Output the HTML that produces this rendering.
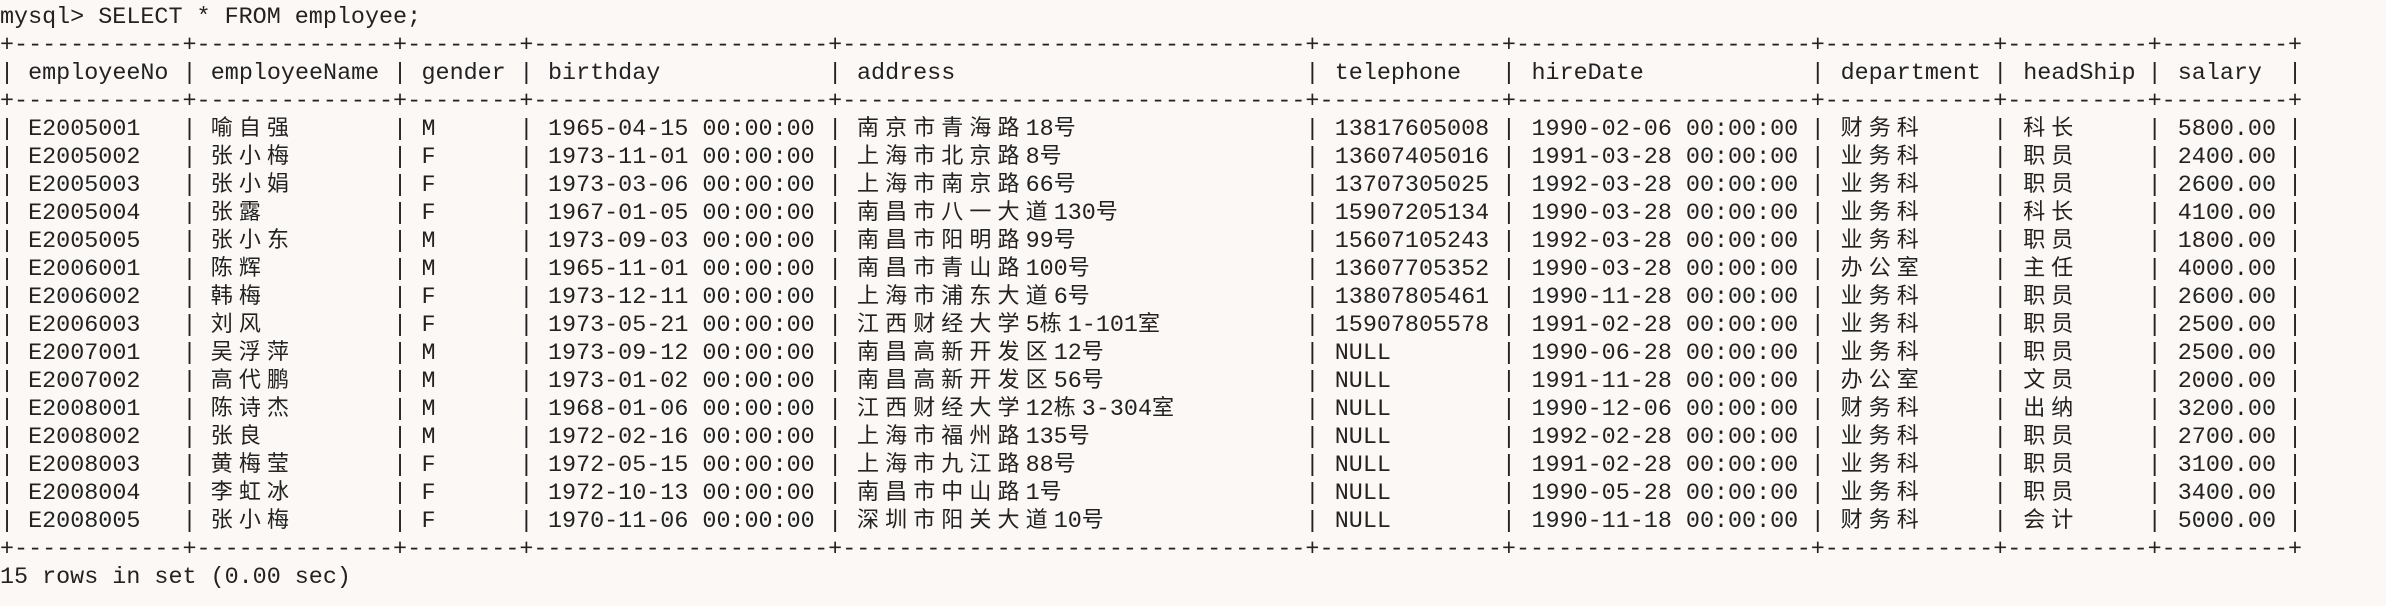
<!DOCTYPE html>
<html><head><meta charset="utf-8"><style>
html,body{margin:0;padding:0;background:#fcf8f5;}
body{width:2386px;height:606px;overflow:hidden;position:relative;color:#222;font-family:"Liberation Mono","Noto Sans CJK SC",monospace;font-size:23.4px;}
.l{position:absolute;left:0;height:28px;line-height:28px;white-space:pre;width:2386px;}
.r::before{content:"|            |              |        |                     |                                 |             |                     |            |          |         |";position:absolute;left:0;top:0;}
.l span{position:absolute;top:0;height:28px;}
b{font-weight:normal;font-family:"Noto Sans CJK SC",sans-serif;font-size:22px;letter-spacing:6.1px;display:inline-block;vertical-align:top;height:28px;line-height:28px;position:relative;top:-4px;}
.a{left:28.1px}.b{left:210.75px}.c{left:421.5px}.d{left:548px}.e{left:857px}.f{left:1334.75px}.g{left:1531.5px}.h{left:1840.6px}.i{left:2023.2px}.j{left:2177.75px}
#w{position:absolute;left:0;top:3px;width:2386px;height:600px;}
</style></head><body><div id="w">
<div class="l" style="top:1px">mysql&gt; SELECT * FROM employee;</div>
<div class="l" style="top:29px">+------------+--------------+--------+---------------------+---------------------------------+-------------+---------------------+------------+----------+---------+</div>
<div class="l r" style="top:57px"><span class="a">employeeNo</span><span class="b">employeeName</span><span class="c">gender</span><span class="d">birthday</span><span class="e">address</span><span class="f">telephone</span><span class="g">hireDate</span><span class="h">department</span><span class="i">headShip</span><span class="j">salary</span></div>
<div class="l" style="top:85px">+------------+--------------+--------+---------------------+---------------------------------+-------------+---------------------+------------+----------+---------+</div>
<div class="l r" style="top:113px"><span class="a">E2005001</span><span class="b"><b>喻自强</b></span><span class="c">M</span><span class="d">1965-04-15 00:00:00</span><span class="e"><b>南京市青海路</b>18<b>号</b></span><span class="f">13817605008</span><span class="g">1990-02-06 00:00:00</span><span class="h"><b>财务科</b></span><span class="i"><b>科长</b></span><span class="j">5800.00</span></div>
<div class="l r" style="top:141px"><span class="a">E2005002</span><span class="b"><b>张小梅</b></span><span class="c">F</span><span class="d">1973-11-01 00:00:00</span><span class="e"><b>上海市北京路</b>8<b>号</b></span><span class="f">13607405016</span><span class="g">1991-03-28 00:00:00</span><span class="h"><b>业务科</b></span><span class="i"><b>职员</b></span><span class="j">2400.00</span></div>
<div class="l r" style="top:169px"><span class="a">E2005003</span><span class="b"><b>张小娟</b></span><span class="c">F</span><span class="d">1973-03-06 00:00:00</span><span class="e"><b>上海市南京路</b>66<b>号</b></span><span class="f">13707305025</span><span class="g">1992-03-28 00:00:00</span><span class="h"><b>业务科</b></span><span class="i"><b>职员</b></span><span class="j">2600.00</span></div>
<div class="l r" style="top:197px"><span class="a">E2005004</span><span class="b"><b>张露</b></span><span class="c">F</span><span class="d">1967-01-05 00:00:00</span><span class="e"><b>南昌市八一大道</b>130<b>号</b></span><span class="f">15907205134</span><span class="g">1990-03-28 00:00:00</span><span class="h"><b>业务科</b></span><span class="i"><b>科长</b></span><span class="j">4100.00</span></div>
<div class="l r" style="top:225px"><span class="a">E2005005</span><span class="b"><b>张小东</b></span><span class="c">M</span><span class="d">1973-09-03 00:00:00</span><span class="e"><b>南昌市阳明路</b>99<b>号</b></span><span class="f">15607105243</span><span class="g">1992-03-28 00:00:00</span><span class="h"><b>业务科</b></span><span class="i"><b>职员</b></span><span class="j">1800.00</span></div>
<div class="l r" style="top:253px"><span class="a">E2006001</span><span class="b"><b>陈辉</b></span><span class="c">M</span><span class="d">1965-11-01 00:00:00</span><span class="e"><b>南昌市青山路</b>100<b>号</b></span><span class="f">13607705352</span><span class="g">1990-03-28 00:00:00</span><span class="h"><b>办公室</b></span><span class="i"><b>主任</b></span><span class="j">4000.00</span></div>
<div class="l r" style="top:281px"><span class="a">E2006002</span><span class="b"><b>韩梅</b></span><span class="c">F</span><span class="d">1973-12-11 00:00:00</span><span class="e"><b>上海市浦东大道</b>6<b>号</b></span><span class="f">13807805461</span><span class="g">1990-11-28 00:00:00</span><span class="h"><b>业务科</b></span><span class="i"><b>职员</b></span><span class="j">2600.00</span></div>
<div class="l r" style="top:309px"><span class="a">E2006003</span><span class="b"><b>刘风</b></span><span class="c">F</span><span class="d">1973-05-21 00:00:00</span><span class="e"><b>江西财经大学</b>5<b>栋</b>1-101<b>室</b></span><span class="f">15907805578</span><span class="g">1991-02-28 00:00:00</span><span class="h"><b>业务科</b></span><span class="i"><b>职员</b></span><span class="j">2500.00</span></div>
<div class="l r" style="top:337px"><span class="a">E2007001</span><span class="b"><b>吴浮萍</b></span><span class="c">M</span><span class="d">1973-09-12 00:00:00</span><span class="e"><b>南昌高新开发区</b>12<b>号</b></span><span class="f">NULL</span><span class="g">1990-06-28 00:00:00</span><span class="h"><b>业务科</b></span><span class="i"><b>职员</b></span><span class="j">2500.00</span></div>
<div class="l r" style="top:365px"><span class="a">E2007002</span><span class="b"><b>高代鹏</b></span><span class="c">M</span><span class="d">1973-01-02 00:00:00</span><span class="e"><b>南昌高新开发区</b>56<b>号</b></span><span class="f">NULL</span><span class="g">1991-11-28 00:00:00</span><span class="h"><b>办公室</b></span><span class="i"><b>文员</b></span><span class="j">2000.00</span></div>
<div class="l r" style="top:393px"><span class="a">E2008001</span><span class="b"><b>陈诗杰</b></span><span class="c">M</span><span class="d">1968-01-06 00:00:00</span><span class="e"><b>江西财经大学</b>12<b>栋</b>3-304<b>室</b></span><span class="f">NULL</span><span class="g">1990-12-06 00:00:00</span><span class="h"><b>财务科</b></span><span class="i"><b>出纳</b></span><span class="j">3200.00</span></div>
<div class="l r" style="top:421px"><span class="a">E2008002</span><span class="b"><b>张良</b></span><span class="c">M</span><span class="d">1972-02-16 00:00:00</span><span class="e"><b>上海市福州路</b>135<b>号</b></span><span class="f">NULL</span><span class="g">1992-02-28 00:00:00</span><span class="h"><b>业务科</b></span><span class="i"><b>职员</b></span><span class="j">2700.00</span></div>
<div class="l r" style="top:449px"><span class="a">E2008003</span><span class="b"><b>黄梅莹</b></span><span class="c">F</span><span class="d">1972-05-15 00:00:00</span><span class="e"><b>上海市九江路</b>88<b>号</b></span><span class="f">NULL</span><span class="g">1991-02-28 00:00:00</span><span class="h"><b>业务科</b></span><span class="i"><b>职员</b></span><span class="j">3100.00</span></div>
<div class="l r" style="top:477px"><span class="a">E2008004</span><span class="b"><b>李虹冰</b></span><span class="c">F</span><span class="d">1972-10-13 00:00:00</span><span class="e"><b>南昌市中山路</b>1<b>号</b></span><span class="f">NULL</span><span class="g">1990-05-28 00:00:00</span><span class="h"><b>业务科</b></span><span class="i"><b>职员</b></span><span class="j">3400.00</span></div>
<div class="l r" style="top:505px"><span class="a">E2008005</span><span class="b"><b>张小梅</b></span><span class="c">F</span><span class="d">1970-11-06 00:00:00</span><span class="e"><b>深圳市阳关大道</b>10<b>号</b></span><span class="f">NULL</span><span class="g">1990-11-18 00:00:00</span><span class="h"><b>财务科</b></span><span class="i"><b>会计</b></span><span class="j">5000.00</span></div>
<div class="l" style="top:533px">+------------+--------------+--------+---------------------+---------------------------------+-------------+---------------------+------------+----------+---------+</div>
<div class="l" style="top:561px">15 rows in set (0.00 sec)</div>
</div></body></html>
